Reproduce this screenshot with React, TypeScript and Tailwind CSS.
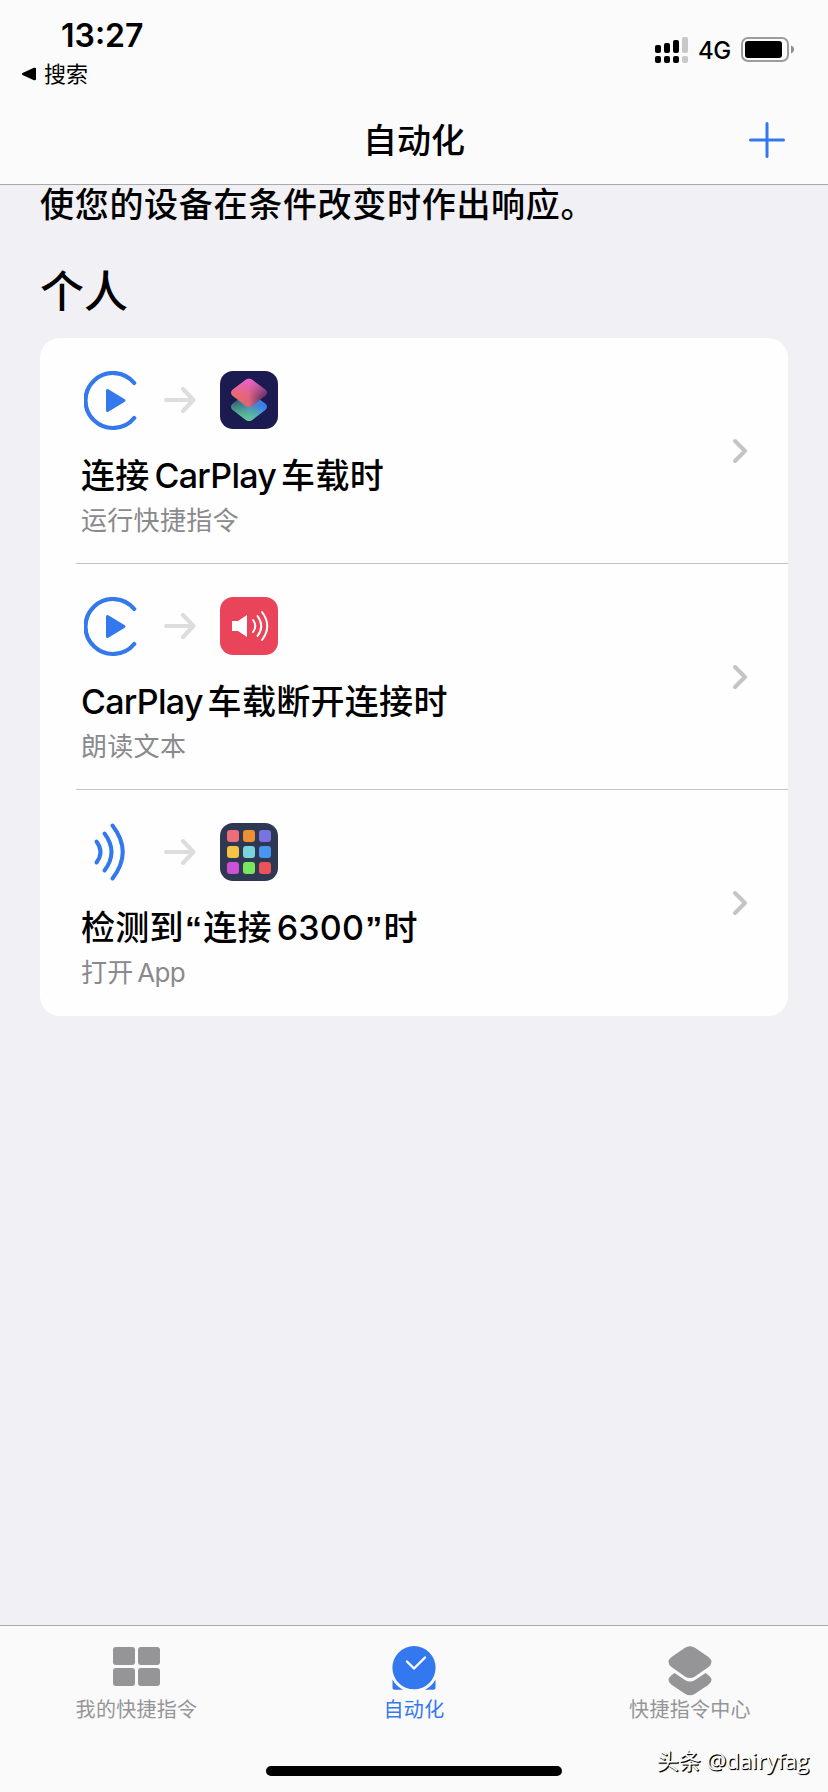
import type { ReactNode } from "react";

function SignalIcon() {
    return (
        <svg width="34" height="27" viewBox="0 0 34 27">
            <rect x="0" y="8" width="6" height="8" rx="2" />
            <rect x="9" y="6" width="6" height="10" rx="2" />
            <rect x="18" y="3" width="6" height="13" rx="2" />
            <rect x="27" y="0" width="6" height="16" rx="2" fill="#c8c8c8" />
            <rect x="0" y="19" width="6" height="7" rx="2" />
            <rect x="9" y="19" width="6" height="7" rx="2" />
            <rect x="18" y="19" width="6" height="7" rx="2" />
            <rect x="27" y="19" width="6" height="7" rx="2" fill="#c8c8c8" />
        </svg>
    );
}

function BatteryIcon() {
    return (
        <svg width="54" height="26" viewBox="0 0 54 26">
            <rect x="1" y="1" width="46" height="23" rx="6" fill="none" stroke="#9c9c9d" strokeWidth="2" />
            <rect x="4" y="4" width="37" height="17" rx="3" />
            <path d="M50 8.5c2.2.8 3 2.2 3 4s-.8 3.200-3 4z" fill="#8e8e8f" />
        </svg>
    );
}

function CarPlayIcon() {
    return (
        <svg width="60" height="60" viewBox="0 0 60 60">
            <path d="M50.200 12A27.500 27.500 0 1 0 50.200 47" fill="none" stroke="#3478ed" strokeWidth="4.200" strokeLinecap="round" />
            <path d="M23.500 19.500v20l16.500-10z" fill="#3478ed" stroke="#3478ed" strokeWidth="3" strokeLinejoin="round" />
        </svg>
    );
}

function NfcIcon() {
    return (
        <svg width="60" height="60" viewBox="0 0 60 60" fill="none" stroke="#3478ed" strokeWidth="4" strokeLinecap="round">
            <path d="M12.500 18.500Q20.500 29 12.500 39.500" />
            <path d="M20.500 10.500Q34.500 29 20.500 47.500" />
            <path d="M28.500 2.500Q49 29 28.500 55.500" />
        </svg>
    );
}

function ArrowIcon() {
    return (
        <svg width="32" height="26" viewBox="0 0 32 26" fill="none" stroke="#dddddd" strokeWidth="4" strokeLinecap="round" strokeLinejoin="round">
            <path d="M2 13h27M19 2l10.500 11L19 24" />
        </svg>
    );
}

function ChevronIcon() {
    return (
        <svg width="16" height="26" viewBox="0 0 16 26" fill="none" stroke="#c4c4c5" strokeWidth="4" strokeLinecap="round" strokeLinejoin="round">
            <path d="M3 3l10 10L3 23" />
        </svg>
    );
}

function ShortcutsAppIcon() {
    return (
        <svg width="58" height="58" viewBox="0 0 58 58">
            <defs>
                <linearGradient id="top" x1="0.100" y1="0.600" x2="0.950" y2="0.550">
                    <stop offset="0" stopColor="#ec6a62" />
                    <stop offset="0.450" stopColor="#e0647c" />
                    <stop offset="1" stopColor="#4a2a63" />
                </linearGradient>
                <linearGradient id="pink" x1="0.500" y1="0" x2="0.500" y2="0.700">
                    <stop offset="0" stopColor="#ea62d2" />
                    <stop offset="1" stopColor="#ea62a8" stopOpacity="0" />
                </linearGradient>
                <linearGradient id="bottom" x1="0.100" y1="0.400" x2="0.900" y2="0.400">
                    <stop offset="0" stopColor="#2f5f72" />
                    <stop offset="0.500" stopColor="#4689b4" />
                    <stop offset="1" stopColor="#3a7df2" />
                </linearGradient>
                <linearGradient id="green" x1="0.400" y1="1" x2="0.550" y2="0.400">
                    <stop offset="0" stopColor="#66cf95" />
                    <stop offset="1" stopColor="#66cf95" stopOpacity="0" />
                </linearGradient>
            </defs>
            <rect width="58" height="58" rx="13" fill="#1b1b52" />
            <path d="M25.500 23q3.500-2.500 7 0L45.500 32.800q3 3 0 6L32.500 48.700q-3.500 2.500-7 0L12.500 38.800q-3-3 0-6z" fill="url(#bottom)" />
            <path d="M25.500 23q3.500-2.500 7 0L45.500 32.800q3 3 0 6L32.500 48.700q-3.500 2.500-7 0L12.500 38.800q-3-3 0-6z" fill="url(#green)" />
            <path d="M25.500 9q3.500-2.500 7 0L45.500 18.800q3 3 0 6L32.500 34.700q-3.500 2.500-7 0L12.500 24.800q-3-3 0-6z" fill="url(#top)" />
            <path d="M25.500 9q3.500-2.500 7 0L45.500 18.800q3 3 0 6L32.500 34.700q-3.500 2.500-7 0L12.500 24.800q-3-3 0-6z" fill="url(#pink)" />
        </svg>
    );
}

function SpeakAppIcon() {
    return (
        <svg width="58" height="58" viewBox="0 0 58 58">
            <rect width="58" height="58" rx="13" fill="#e94459" />
            <path d="M12 24h6l9-6v22l-9-6h-6z" fill="#fff" />
            <g fill="none" stroke="#fff" strokeWidth="2" strokeLinecap="round">
                <path d="M33 23q4.600 6 0 12" />
                <path d="M37.500 19q7.500 10 0 20" />
                <path d="M42 15q10.500 14 0 28" />
            </g>
        </svg>
    );
}

const tiles = [
    "bg-[#ed6d7b]",
    "bg-[#ec8f35]",
    "bg-[#7a72e0]",
    "bg-[#f4c446]",
    "bg-[#79d5d9]",
    "bg-[#4896ef]",
    "bg-[#cb52d6]",
    "bg-[#7ae660]",
    "bg-[#ea5358]",
];

function OpenAppIcon() {
    return (
        <div className="grid h-[58px] w-[58px] grid-cols-3 gap-1 rounded-[13px] bg-[#2f3852] p-[7px]">
            {tiles.map((color) => (
                <span key={color} className={`rounded-[3px] ${color}`} />
            ))}
        </div>
    );
}

interface AutomationProps {
    trigger: ReactNode;
    action: ReactNode;
    title: string;
    subtitle: string;
}

const automations: AutomationProps[] = [
    { trigger: <CarPlayIcon />, action: <ShortcutsAppIcon />, title: "连接 CarPlay 车载时", subtitle: "运行快捷指令" },
    { trigger: <CarPlayIcon />, action: <SpeakAppIcon />, title: "CarPlay 车载断开连接时", subtitle: "朗读文本" },
    { trigger: <NfcIcon />, action: <OpenAppIcon />, title: "检测到“连接 6300”时", subtitle: "打开 App" },
];

// Latin words are set tighter than the Chinese around them, curly quotes get a little room
function MixedText({ text }: { text: string }) {
    return text.split(/([A-Za-z]+|[0-9]+|[“”])/).map((part, i) => {
        if (/^[A-Za-z]/.test(part)) {
            return <span key={i} className="tracking-[-0.7px]">{part}</span>;
        }
        if (/^[0-9]/.test(part)) {
            return <span key={i} className="tracking-[0.2px]">{part}</span>;
        }
        if (/^[“”]/.test(part)) {
            return <span key={i} className="px-px font-['Liberation_Sans',sans-serif] font-bold">{part}</span>;
        }
        return part;
    });
}

function AutomationRow({ trigger, action, title, subtitle }: AutomationProps) {
    return (
        <li className="group flex h-[226px] pl-9">
            <div className="flex flex-1 border-b-[1px] border-[#c3c3c5] pl-[5px] group-last:border-b-0">
                <div className="flex-1 pt-[33px]">
                    <div className="flex h-[58px] items-center pl-[3px]">
                        <div className="h-[58px] w-20">{trigger}</div>
                        <ArrowIcon />
                        <div className="ml-6">{action}</div>
                    </div>
                    <h3 className="mt-[27px] h-10 text-[34px] leading-10 font-medium tracking-[0.3px] whitespace-nowrap text-black [word-spacing:-4.5px]">
                        <MixedText text={title} />
                    </h3>
                    <p className="mt-[9px] text-[26px] leading-8 tracking-[0.3px] text-[#8a8a8d] [word-spacing:-4px]">
                        <MixedText text={subtitle} />
                    </p>
                </div>
                <div className="flex items-center pr-10">
                    <ChevronIcon />
                </div>
            </div>
        </li>
    );
}

function GridIcon() {
    return (
        <svg width="47" height="39" viewBox="0 0 47 39" fill="#959597">
            <rect width="22" height="18" rx="3" />
            <rect x="25" width="22" height="18" rx="3" />
            <rect y="21" width="22" height="18" rx="3" />
            <rect x="25" y="21" width="22" height="18" rx="3" />
        </svg>
    );
}

function ClockIcon() {
    return (
        <svg width="44" height="44" viewBox="0 0 44 44" className="-mt-px">
            <path d="M.500 33.500C3 38 6.500 41.500 11 43.800H2.500a2 2 0 0 1-2-2zM43.500 33.500C41 38 37.500 41.500 33 43.800h8.500a2 2 0 0 0 2-2z" fill="#3478f0" />
            <circle cx="22" cy="22" r="22.500" fill="#fafafb" />
            <circle cx="22" cy="21.700" r="21.600" fill="#3478f0" />
            <path d="M15 15.500l7 7L33 11.500" fill="none" stroke="#fff" strokeWidth="2.400" strokeLinecap="round" strokeLinejoin="round" />
        </svg>
    );
}

function LayersIcon() {
    return (
        <svg width="44" height="50" viewBox="0 0 44 50" fill="#959597" className="-mt-px">
            <path d="M17 1.800q5-3 10 0L40.500 11q6 5 0 10L27 30.400q-5 3-10 0L3.500 21q-6-5 0-10z" />
            <path d="M6.500 27L17 34q5 3 10 0l10.500-7 3 2.200q6 4.800 0 9.500L27 47.800q-5 3-10 0L3.500 38.700q-6-4.700 0-9.500z" />
        </svg>
    );
}

const tabs = [
    { label: "我的快捷指令", icon: <GridIcon />, color: "pr-[3px] text-[#959597]" },
    { label: "自动化", icon: <ClockIcon />, color: "text-[#3478f0]" },
    { label: "快捷指令中心", icon: <LayersIcon />, color: "text-[#959597]" },
];

export default function App() {
    return (
        <div className="relative flex h-[1792px] w-[828px] flex-col overflow-hidden bg-[#f1f0f5] font-['Inter','Noto_Sans_CJK_SC',sans-serif] text-black">
            <header className="h-[185px] border-b border-[#a9a9ac] bg-[#fbfbfc]">
                <div className="flex h-[100px] justify-between">
                    <div className="pt-[20px] pl-[22px]">
                        <div className="pl-[39px] text-[32px] leading-8 font-semibold">13:27</div>
                        <div className="mt-[10px] flex items-center text-[22px] leading-6">
                            <svg width="14" height="14" viewBox="0 0 14 14" className="mr-2">
                                <path d="M.500 6L12 .800q2-.6 2 1.200v10q0 1.800-2 1.200L.500 8q-1-1 0-2z" />
                            </svg>
                            搜索
                        </div>
                    </div>
                    <div className="mt-[37px] flex h-[26px] items-center pr-[33px]">
                        <SignalIcon />
                        <span className="ml-[9px] w-[43px] pt-px text-[24px] leading-6 font-medium tracking-[-0.5px]">4G</span>
                        <BatteryIcon />
                    </div>
                </div>
                <div className="grid h-20 grid-cols-3 items-center">
                    <h1 className="col-start-2 pt-0.5 text-center text-[34px] leading-10 font-medium">自动化</h1>
                    <svg width="36" height="36" viewBox="0 0 36 36" className="mr-[43px] justify-self-end" stroke="#3478ed" strokeWidth="3" strokeLinecap="round">
                        <path d="M18 1.500v33M1.500 18h33" />
                    </svg>
                </div>
            </header>

            <main className="flex-1 px-10">
                <p className="text-[34px] leading-10 font-medium tracking-[0.7px] whitespace-nowrap">使您的设备在条件改变时作出响应。</p>
                <h2 className="mt-[41px] text-[44px] leading-[52px] font-medium">个人</h2>
                <ul className="mt-5 h-[678px] overflow-hidden rounded-[20px] bg-[#fefefe]">
                    {automations.map((automation) => (
                        <AutomationRow key={automation.title} {...automation} />
                    ))}
                </ul>
            </main>

            <nav className="h-[167px] border-t border-[#a9a9ac] bg-[#fafafb]">
                <div className="grid h-[140px] grid-cols-3 pt-[21px]">
                    {tabs.map((tab) => (
                        <div key={tab.label} className={`flex flex-col items-center ${tab.color}`}>
                            <div className="flex h-[51px] items-start">{tab.icon}</div>
                            <span className="text-[20px] leading-6 tracking-[0.3px]">{tab.label}</span>
                        </div>
                    ))}
                </div>
                <div className="mx-auto h-[10px] w-[296px] rounded-full bg-black" />
            </nav>

            <div className="absolute right-[19px] bottom-[18px] font-['Open_Sans','Noto_Sans_CJK_SC',sans-serif] text-[22px] leading-7 text-white [text-shadow:1px_1px_1px_#000,1px_1px_0_#000]">
                头条 @dairyfag
            </div>
        </div>
    );
}
